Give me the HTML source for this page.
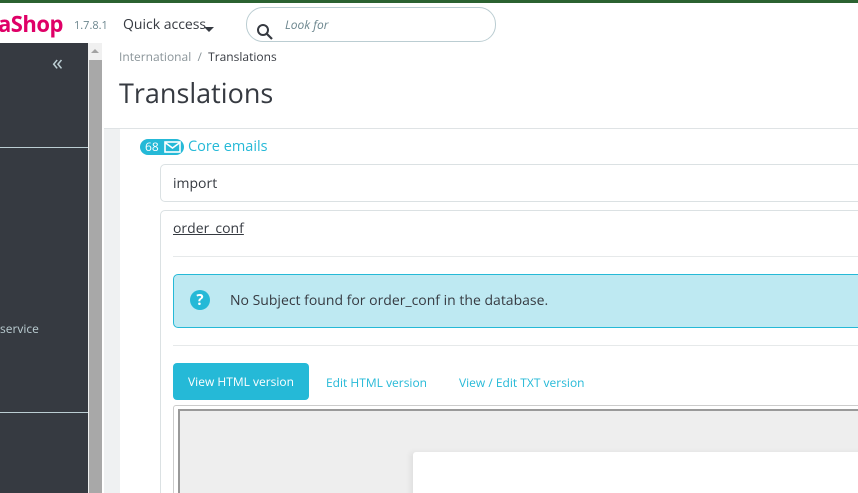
<!DOCTYPE html>
<html><head><meta charset="utf-8"><style>
*{box-sizing:border-box;margin:0;padding:0}
html,body{width:858px;height:493px;overflow:hidden}
body{position:relative;background:#fff;font-family:"Open Sans","Liberation Sans",sans-serif;color:#363a41}
.a{position:absolute}
#w{position:absolute;left:0;top:0;width:858px;height:493px;overflow:hidden}
</style></head><body><div id="w">
<div class="a" style="left:0;top:0;width:858px;height:3px;background:#2b6231"></div>
<div class="a" style="left:-2px;top:9px;font-size:22px;font-weight:bold;color:#df0067;letter-spacing:-0.5px">aShop</div>
<div class="a" style="left:74px;top:18px;font-size:11px;color:#6c868e">1.7.8.1</div>
<div class="a" style="left:123px;top:15px;font-size:14px;color:#363a41">Quick access</div>
<div class="a" style="left:204px;top:27px;width:0;height:0;border-left:5px solid transparent;border-right:5px solid transparent;border-top:5px solid #363a41"></div>
<div class="a" style="left:246px;top:7px;width:250px;height:35px;border:1px solid #bbcdd2;border-radius:17px"></div>
<svg class="a" style="left:256px;top:23px" width="18" height="18" viewBox="0 0 18 18"><circle cx="7" cy="7" r="5" fill="none" stroke="#363a41" stroke-width="2"/><line x1="11" y1="11" x2="16" y2="16" stroke="#363a41" stroke-width="2.2"/></svg>
<div class="a" style="left:285px;top:16px;font-size:12px;font-style:italic;color:#6c868e">Look for</div>
<div class="a" style="left:0;top:43px;width:88px;height:450px;background:#363a41"></div>
<div class="a" style="left:52px;top:49px;font-size:22px;color:#bbcdd2;line-height:26px">«</div>
<div class="a" style="left:0;top:147px;width:88px;height:1px;background:#bbcdd2"></div>
<div class="a" style="left:0;top:412px;width:88px;height:1px;background:#bbcdd2"></div>
<div class="a" style="left:0;top:320px;font-size:12px;color:#bbcdd2">service</div>
<div class="a" style="left:88px;top:43px;width:14px;height:450px;background:#f0f0f0"></div>
<div class="a" style="left:89px;top:60px;width:13px;height:433px;background:#a8a8a8"></div>
<div class="a" style="left:91px;top:49px;width:0;height:0;border-left:4px solid transparent;border-right:4px solid transparent;border-bottom:4px solid #a3a3a3"></div>
<div class="a" style="left:104px;top:129px;width:16px;height:364px;background:#eff1f2"></div>
<div class="a" style="left:104px;top:128px;width:754px;height:1px;background:#dfe3e5"></div>
<div class="a" style="left:119px;top:48px;font-size:12px;color:#8a9499">International&nbsp;&nbsp;/&nbsp;&nbsp;<span style="color:#363a41">Translations</span></div>
<div class="a" style="left:119px;top:74px;font-size:27px;color:#363a41">Translations</div>
<div class="a" style="left:140px;top:139px;width:44px;height:16px;border-radius:8px;background:#25b9d7;color:#fff;font-size:12px;line-height:16px;padding-left:5px">68</div>
<svg class="a" style="left:164px;top:141px" width="17" height="12" viewBox="0 0 17 12"><rect x="1" y="1" width="15" height="10" fill="none" stroke="#fff" stroke-width="1.6"/><path d="M1 1.5L8.5 7L16 1.5" fill="none" stroke="#fff" stroke-width="1.6"/></svg>
<div class="a" style="left:188px;top:137px;font-size:14.5px;color:#25b9d7">Core emails</div>
<div class="a" style="left:160px;top:164px;width:710px;height:38px;border:1px solid #dbe1e3;border-radius:5px"></div>
<div class="a" style="left:173px;top:174px;font-size:14px">import</div>
<div class="a" style="left:160px;top:210px;width:710px;height:300px;border:1px solid #dbe1e3;border-radius:5px"></div>
<div class="a" style="left:173px;top:219px;font-size:14px;text-decoration:underline;color:#363a41">order_conf</div>
<div class="a" style="left:173px;top:256px;width:685px;height:1px;background:#e6e9ea"></div>
<div class="a" style="left:173px;top:274px;width:700px;height:54px;background:#bee9f2;border:1px solid #25b9d7;border-radius:5px"></div>
<div class="a" style="left:190px;top:290px;width:20px;height:20px;border-radius:50%;background:#25b9d7;color:#fff;font-weight:bold;font-size:15px;text-align:center;line-height:20px">?</div>
<div class="a" style="left:230px;top:291px;font-size:14px;color:#363a41">No Subject found for order_conf in the database.</div>
<div class="a" style="left:173px;top:345px;width:685px;height:1px;background:#e6e9ea"></div>
<div class="a" style="left:173px;top:363px;width:136px;height:37px;background:#25b9d7;border-radius:4px;color:#fff;font-size:12px;text-align:center;line-height:37px">View HTML version</div>
<div class="a" style="left:326px;top:374px;font-size:12px;color:#25b9d7">Edit HTML version</div>
<div class="a" style="left:459px;top:374px;font-size:12px;color:#25b9d7">View / Edit TXT version</div>
<div class="a" style="left:173px;top:405px;width:700px;height:100px;border:1px solid #ccc;border-radius:3px"></div>
<div class="a" style="left:178px;top:409px;width:700px;height:100px;border:2px solid #999;background:#eee"></div>
<div class="a" style="left:413px;top:452px;width:460px;height:60px;background:#fff;border-radius:3px;box-shadow:-3px 0 6px rgba(0,0,0,0.06)"></div>
</div></body></html>
